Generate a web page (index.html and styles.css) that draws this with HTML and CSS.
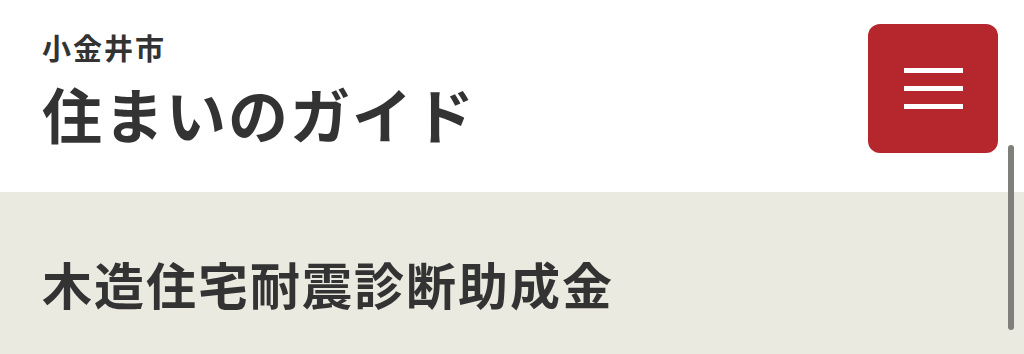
FILE: index.html
```html
<!DOCTYPE html>
<html lang="ja">
<head>
<meta charset="utf-8">
<title>住まいのガイド</title>
<link rel="stylesheet" href="styles.css">
</head>
<body>
<header class="site-header">
  <div class="brand">
    <p class="city">小金井市</p>
    <h1 class="site-title">住まいのガイド</h1>
  </div>
  <button class="menu-btn" aria-label="メニュー">
    <span class="bar"></span>
    <span class="bar"></span>
    <span class="bar"></span>
  </button>
</header>
<main class="content">
  <h2 class="page-title">木造住宅耐震診断助成金</h2>
</main>
<div class="scrollbar"></div>
</body>
</html>
```
FILE: styles.css
```css
html, body {
  margin: 0;
  padding: 0;
}
body {
  width: 1024px;
  height: 354px;
  overflow: hidden;
  background: #ebeae0;
  font-family: "Noto Sans CJK JP", "Noto Sans", sans-serif;
  color: #333333;
  position: relative;
}
.site-header {
  background: #ffffff;
  height: 192px;
  box-sizing: border-box;
  display: flex;
  justify-content: space-between;
  align-items: flex-start;
  padding: 24px 26px 0 42px;
}
.brand {
  display: flex;
  flex-direction: column;
}
.city {
  margin: 8px 0 0 0;
  font-size: 29px;
  font-weight: 700;
  line-height: 30px;
  letter-spacing: 2px;
}
.site-title {
  margin: 16px 0 0 0;
  font-size: 60px;
  font-weight: 700;
  line-height: 70px;
  letter-spacing: 2px;
}
.menu-btn {
  width: 130px;
  height: 129px;
  background: #b5272d;
  border: none;
  border-radius: 12px;
  display: flex;
  flex-direction: column;
  align-items: center;
  justify-content: center;
  gap: 13px;
  padding: 0;
}
.bar {
  display: block;
  width: 59px;
  height: 5px;
  background: #ffffff;
}
.content {
  padding: 56px 0 0 42px;
}
.page-title {
  margin: 0;
  font-size: 50px;
  font-weight: 700;
  line-height: 70px;
  letter-spacing: 2px;
}
.scrollbar {
  position: absolute;
  left: 1008px;
  top: 145px;
  width: 6px;
  height: 185px;
  border-radius: 3px;
  background: #7f7f7c;
}
```
